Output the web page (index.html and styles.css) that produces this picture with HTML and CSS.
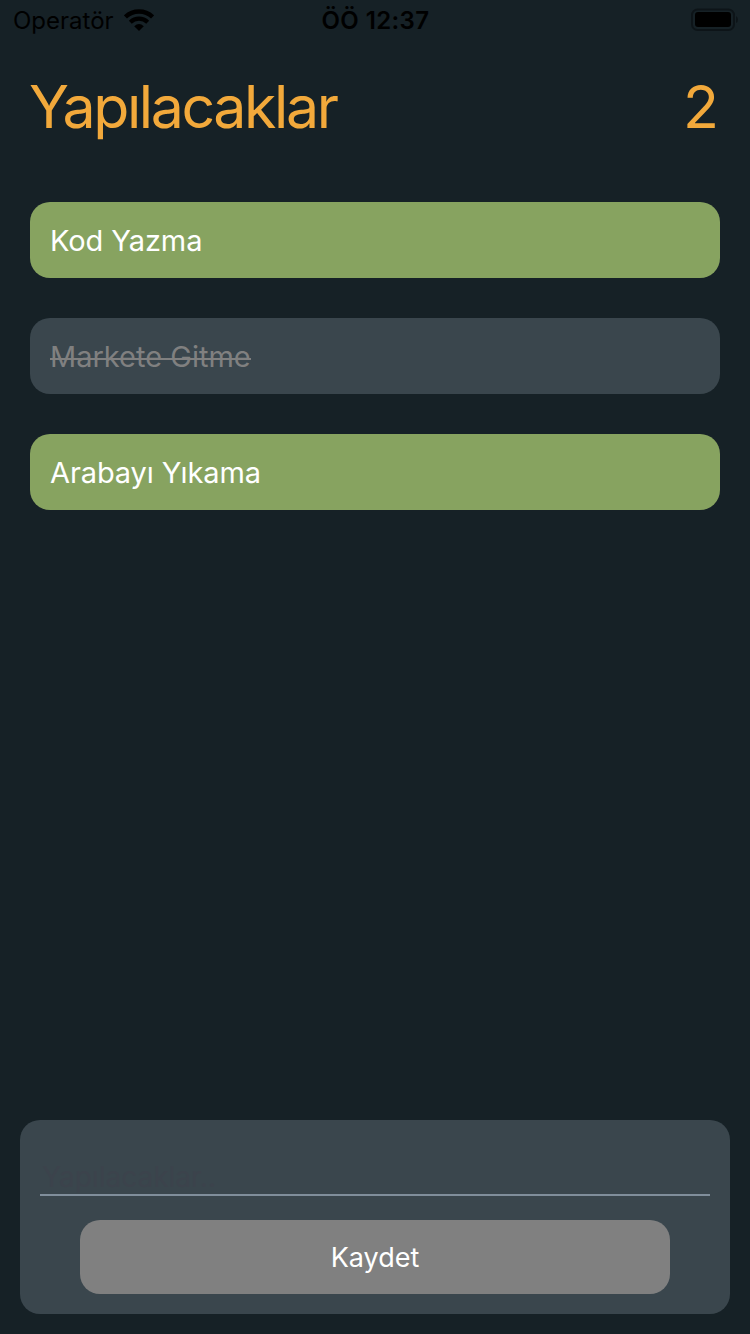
FILE: index.html
```html
<!DOCTYPE html>
<html lang="tr">
<head>
<meta charset="utf-8">
<title>Yapılacaklar</title>
<link rel="stylesheet" href="styles.css">
</head>
<body>
<div class="screen">
  <div class="status">
    <div class="status-left">
      <span class="carrier">Operatör</span>
      <svg class="wifi" width="30" height="22" viewBox="0 0 30 22">
        <path d="M1.4 7.9 A19.6 19.6 0 0 1 28.6 7.9" fill="none" stroke="#000" stroke-width="4.5"/>
        <path d="M6.3 13.2 A12.4 12.4 0 0 1 23.7 13.2" fill="none" stroke="#000" stroke-width="4.1"/>
        <path d="M15 22 L10.2 17.2 Q15 12.8 19.8 17.2 Z"/>
      </svg>
    </div>
    <span class="clock">ÖÖ 12:37</span>
    <svg class="battery" width="49" height="24" viewBox="0 0 49 24">
      <rect x="2" y="1.5" width="42" height="20.5" rx="5.5" fill="none" stroke="#0d1418" stroke-width="2"/>
      <rect x="5" y="4" width="36" height="15" rx="3"/>
      <path d="M46 8 Q48 9 48 11.5 Q48 14 46 15 Z" fill="#0d1418"/>
    </svg>
  </div>
  <header class="header">
    <h1 class="title">Yapılacaklar</h1>
    <span class="count">2</span>
  </header>
  <ul class="list">
    <li class="item"><span class="task">Kod Yazma</span></li>
    <li class="item done"><span class="task">Markete Gitme</span></li>
    <li class="item"><span class="task">Arabayı Yıkama</span></li>
  </ul>
  <div class="form">
    <div class="field"><span class="placeholder">Yapılacaklar..</span></div>
    <button class="save" type="button">Kaydet</button>
  </div>
</div>
</body>
</html>
```

FILE: styles.css
```css
* { box-sizing: border-box; }
body {
  margin: 0;
  background: #162126;
  font-family: Inter, "Liberation Sans", sans-serif;
}
.screen {
  display: flex;
  flex-direction: column;
  width: 750px;
  height: 1334px;
  padding-bottom: 20px;
}
.status {
  display: grid;
  grid-template-columns: 1fr auto 1fr;
  align-items: center;
  height: 40px;
  padding: 0 12px 0 13px;
  font-size: 24px;
  color: #000;
}
.status-left { display: flex; align-items: center; gap: 10px; }
.clock { font-weight: 600; letter-spacing: 0.4px; }
.battery { justify-self: end; margin-right: -1px; }
.header {
  display: flex;
  justify-content: space-between;
  height: 132px;
  padding: 31px 31px 0 29px;
  color: #f2a93b;
  font-size: 59px;
  line-height: 72px;
}
.title { margin: 0; font: inherit; letter-spacing: -2.4px; }
.list {
  flex: 1;
  display: flex;
  flex-direction: column;
  gap: 40px;
  margin: 0;
  padding: 30px 30px 0;
  list-style: none;
}
.item {
  height: 76px;
  padding: 21px 20px 19px;
  border-radius: 20px;
  background: #87a360;
  color: #fff;
  font-size: 29px;
  line-height: 36px;
  letter-spacing: -0.1px;
}
.done { background: #3a464d; color: #808080; letter-spacing: 0; }
.done .task { position: relative; }
/* strike line sits slightly below the font's own line-through position */
.done .task::after {
  content: "";
  position: absolute;
  left: 0;
  right: 0;
  top: 19px;
  height: 2px;
  background: #808080;
}
.form {
  height: 194px;
  margin: 0 20px;
  padding: 20px;
  border-radius: 20px;
  background: #3a464d;
}
.field {
  display: flex;
  align-items: flex-end;
  height: 56px;
  padding-left: 2px;
  border-bottom: 2px solid #808e9b;
  font-size: 28px;
  line-height: 34px;
}
.placeholder { color: #3c434c; }
.save {
  display: block;
  width: 590px;
  height: 74px;
  margin: 24px auto 0;
  padding: 1px 0 0;
  border: 0;
  border-radius: 20px;
  background: #808080;
  color: #fff;
  font: 27px/34px Inter, "Liberation Sans", sans-serif;
}
```
